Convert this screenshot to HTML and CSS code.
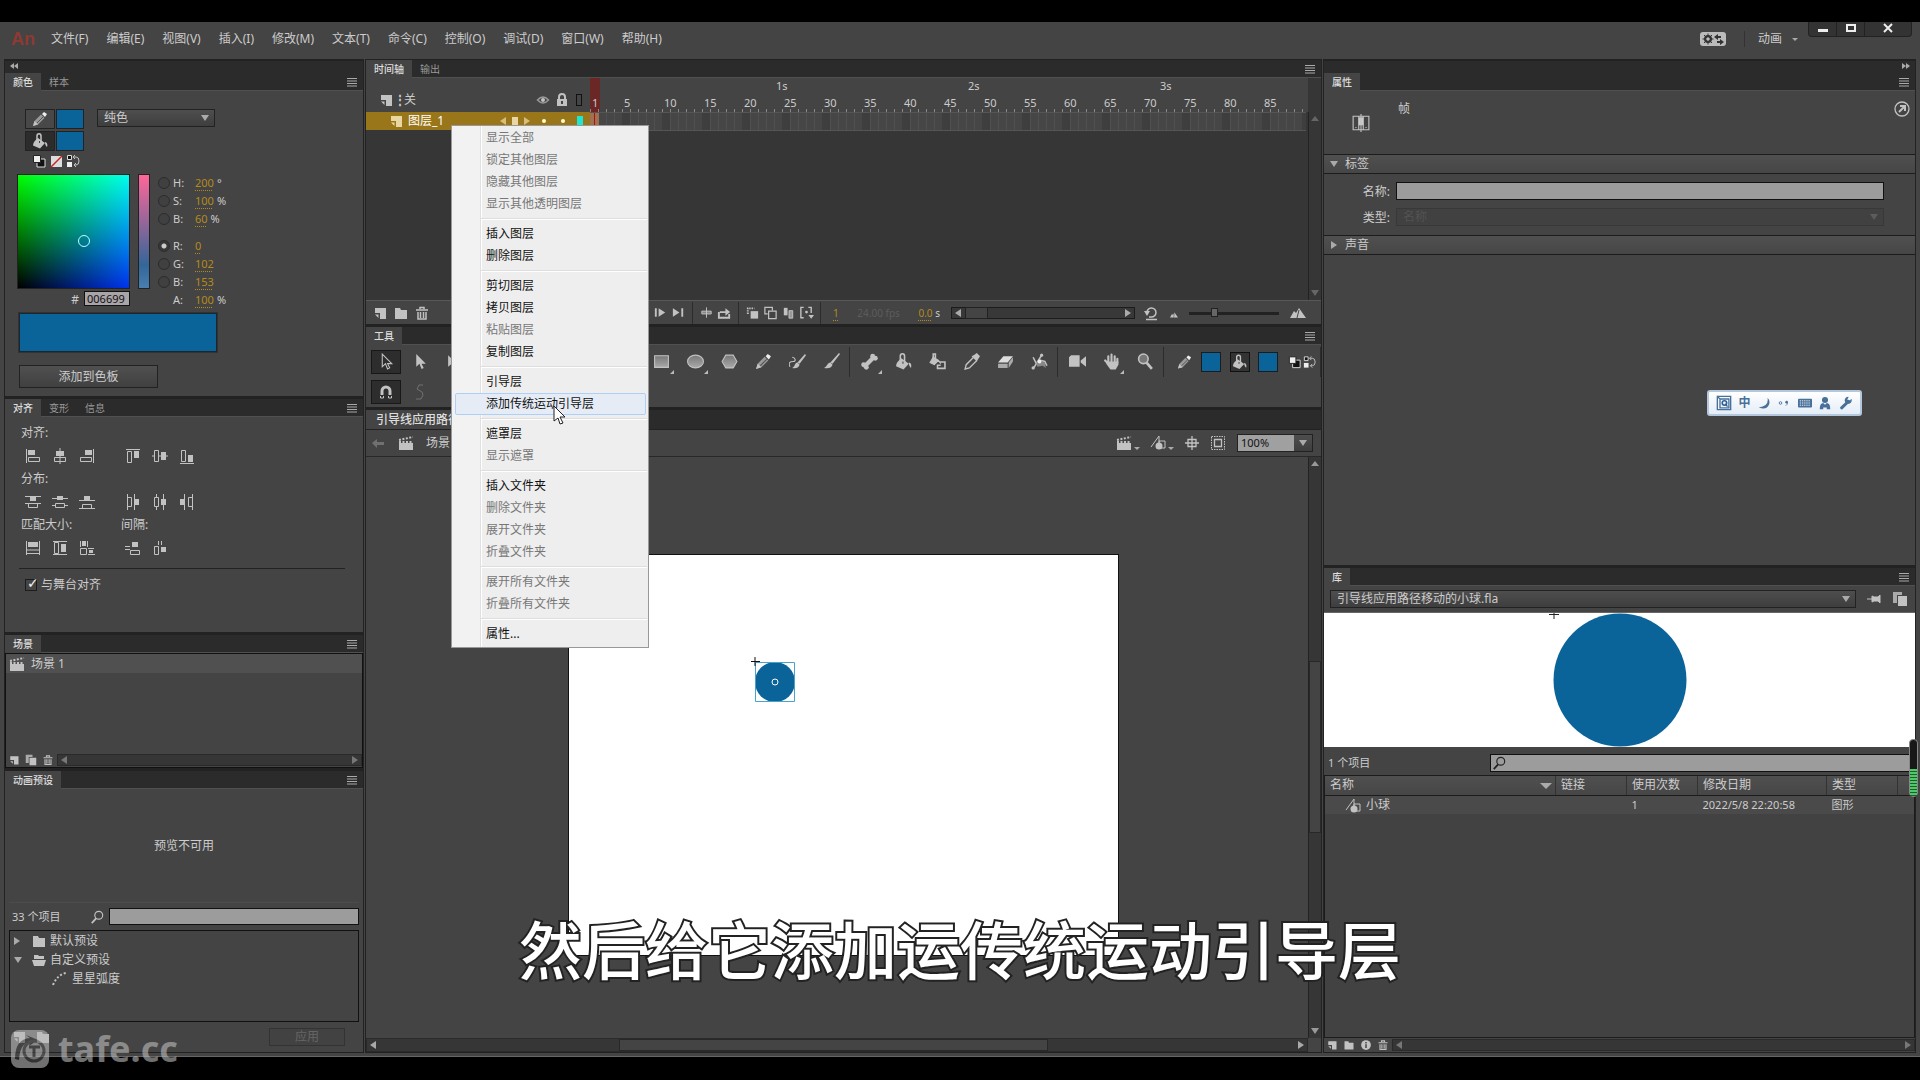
FILE: index.html
```html
<!DOCTYPE html>
<html lang="zh-CN">
<head>
<meta charset="utf-8">
<title>An</title>
<link rel="stylesheet" href="styles.css">
</head>
<body>
<svg class="sprite" aria-hidden="true">
  <defs>
    <linearGradient id="metal" x1="0" y1="0" x2="0" y2="1"><stop offset="0" stop-color="#777"/><stop offset="1" stop-color="#aaa"/></linearGradient>
  </defs>
  <symbol id="menu" viewBox="0 0 12 10"><path d="M1 1.500h10M1 4h10M1 6.500h10M1 9h10" stroke="currentColor"/></symbol>
  <symbol id="page" viewBox="0 0 16 16"><path d="M3 3h11v11H8V8H3z" fill="currentColor"/><path d="M3 9.500h3.500V13z" fill="currentColor"/></symbol>
  <symbol id="folder" viewBox="0 0 16 16"><path d="M2 3h5l1 2h6v9H2z" fill="currentColor"/></symbol>
  <symbol id="open" viewBox="0 0 16 16"><path d="M3 7V3h4l1 1h5v3zM1 8h14l-2 6H3z" fill="currentColor"/></symbol>
  <symbol id="trash" viewBox="0 0 16 16"><path d="M2 5h12M6 4V2.500h4V4M4 7v7h8V7M6.500 7v6M9.500 7v6" fill="none" stroke="currentColor" stroke-width="1.500"/></symbol>
  <symbol id="clap" viewBox="0 0 16 16"><path d="M1 8h14v7H1z" fill="currentColor"/><path d="M1 5l14-3M1 7h14" stroke="currentColor" stroke-width="2" stroke-dasharray="2 1.500"/></symbol>
  <symbol id="arrow" viewBox="0 0 16 16"><path d="M4 1v12l3-3 2 5 2-1-2-4h4z" fill="none" stroke="currentColor"/></symbol>
  <symbol id="arrowf" viewBox="0 0 16 16"><path d="M4 1v12l3-3 2 5 2-1-2-4h4z" fill="currentColor"/></symbol>
  <symbol id="transform" viewBox="0 0 16 16"><path d="M2 2l6 6-6 5z" fill="currentColor"/><path d="M10 3h4v11H6" fill="none" stroke="currentColor" stroke-dasharray="2 1"/></symbol>
  <symbol id="magnet" viewBox="0 0 16 16"><path d="M4 11V7a4 4 0 018 0v4" fill="none" stroke="currentColor" stroke-width="3"/><path d="M2.500 12v2h3v-2M10.500 12v2h3v-2" fill="none" stroke="currentColor"/></symbol>
  <symbol id="smooth" viewBox="0 0 16 16"><path d="M11 1H7L5 5l5 3 1 3-2 4H4" fill="none" stroke="currentColor"/></symbol>
  <symbol id="rect" viewBox="0 0 16 16"><path d="M1.500 2.500h13v11h-13z" fill="url(#metal)" stroke="currentColor"/></symbol>
  <symbol id="oval" viewBox="0 0 16 16"><ellipse cx="8" cy="8" rx="7.500" ry="6" fill="url(#metal)" stroke="currentColor"/></symbol>
  <symbol id="hex" viewBox="0 0 16 16"><path d="M4.500 2h7l3.500 6-3.500 6h-7L1 8z" fill="url(#metal)" stroke="currentColor"/></symbol>
  <symbol id="pencil" viewBox="0 0 16 16"><path d="M1 15l1.500-5L9 3.500l3.500 3.500L6 13.500z" fill="#999"/><path d="M1 15l1.500-5 3.500 3.500z" fill="currentColor"/><path d="M10 3l2-2 3 2-2 3z" fill="#eee"/><path d="M5 12l6-6" stroke="#555"/></symbol>
  <symbol id="brush" viewBox="0 0 16 16"><path d="M15 0l1 1-7 9-2-1zM7 9l2 2c-1 3-4 4-8 3 3-1 3-5 6-5z" fill="currentColor"/></symbol>
  <symbol id="paint" viewBox="0 0 16 16"><path d="M15 1l1 1-6 8-2-1zM8 9l2 2c-1 3-4 4-7 3 3-1 2-5 5-5z" fill="currentColor"/><path d="M1 13C-1 9 1 8 4 8s2-4-1-4" fill="none" stroke="currentColor"/></symbol>
  <symbol id="bone" viewBox="0 0 16 16"><path d="M4 12l8-8" stroke="currentColor" stroke-width="4"/><g fill="currentColor"><circle cx="2.500" cy="11" r="2.300"/><circle cx="5" cy="13.500" r="2.300"/><circle cx="11" cy="3" r="2.300"/><circle cx="13.500" cy="5" r="2.300"/></g></symbol>
  <symbol id="bucket" viewBox="0 0 16 16"><path d="M6 5l7 5-5 5.500-7-3c0-3 2-5 5-7.500zM13 9c2 0 3 3 2 5-1-1-2-2-2-5z" fill="currentColor"/><path d="M5 9V3c0-3 4-3 4 0v6" fill="none" stroke="currentColor" stroke-width="1.500"/><path d="M7.500 8v2" stroke="#444"/></symbol>
  <symbol id="ink" viewBox="0 0 16 16"><path d="M4 4l5 3-4 4-4-2zM9 7l2 3" fill="currentColor" stroke="currentColor"/><path d="M4 6V1h2v5M10 8.500h5v6H8v-3h3" fill="none" stroke="currentColor" stroke-width="1.500"/></symbol>
  <symbol id="dropper" viewBox="0 0 16 16"><path d="M10 4l-7 7-1 4 4-1 7-7" fill="none" stroke="currentColor" stroke-width="1.300"/><path d="M8 3l5 5 1-2 2-3-3-3-3 2z" fill="currentColor"/></symbol>
  <symbol id="eraser" viewBox="0 0 16 16"><path d="M6 3h9L10 9H1z" fill="#ddd"/><path d="M1 10h9v4H1zM11 9l4-5v4l-4 6z" fill="#aaa"/></symbol>
  <symbol id="width" viewBox="0 0 16 16"><path d="M2 15L10 2M2 4l3 6 4-3 4 1 2 4" fill="none" stroke="currentColor" stroke-width="1.500"/><path d="M5 9l4-2 4 2 1 5-3-2-5 1z" fill="#888"/><circle cx="2" cy="14" r="1.500" fill="currentColor"/><circle cx="8" cy="8" r="1.800" fill="#eee"/><circle cx="10" cy="2" r="1.500" fill="currentColor"/></symbol>
  <symbol id="camera" viewBox="0 0 16 16"><path d="M0 4l2-2h8v11H0zM11 7l5-4v10l-5-4z" fill="currentColor"/></symbol>
  <symbol id="hand" viewBox="0 0 16 16"><path d="M5 9V3M8 8V1.500M11 8V3M13.500 9V5.500M5 10L2 7" stroke="currentColor" stroke-width="2" stroke-linecap="round"/><path d="M4 8h10.500v3L12 15.500H7L3 10z" fill="currentColor"/></symbol>
  <symbol id="lens" viewBox="0 0 16 16"><circle cx="6" cy="5.500" r="4.500" fill="#777" stroke="currentColor" stroke-width="1.500"/><path d="M9 9l5 6" stroke="currentColor" stroke-width="2.500"/></symbol>
  <symbol id="find" viewBox="0 0 16 16"><circle cx="10" cy="6" r="4.500" fill="none" stroke="currentColor" stroke-width="1.300"/><path d="M7 9.500L2 15" stroke="currentColor" stroke-width="2"/></symbol>
  <symbol id="bw" viewBox="0 0 16 16"><path d="M6 6h8v8H6z" fill="#111" stroke="#ddd"/><path d="M2.500 2.500h7v7h-7z" fill="#eee" stroke="#222"/></symbol>
  <symbol id="none" viewBox="0 0 16 16"><path d="M3 3h11v11H3z" fill="#ddd"/><path d="M3 14L14 3" stroke="#c22" stroke-width="1.500"/></symbol>
  <symbol id="swap" viewBox="0 0 16 16"><path d="M2.500 2.500h4v4h-4z" fill="#111" stroke="#ddd"/><path d="M2 9h5v5H2z" fill="#eee"/><path d="M8 4h3q3 0 3 4t-3 4H9M10 2L8 4l2 2M11 10l-2 2 2 2" fill="none" stroke="currentColor"/></symbol>
  <symbol id="eye" viewBox="0 0 16 16"><path d="M2.500 8q5.500-6 11 0-5.500 6-11 0z" fill="none" stroke="#999" stroke-width="1.500"/><circle cx="8" cy="8" r="2" fill="currentColor"/></symbol>
  <symbol id="lock" viewBox="0 0 16 16"><path d="M3 7h10v7H3z" fill="currentColor"/><path d="M5 7V5a3 3 0 016 0v2" fill="none" stroke="currentColor" stroke-width="2"/><path d="M8 9v3" stroke="#444" stroke-width="2"/></symbol>
  <symbol id="step" viewBox="0 0 16 16"><path d="M2 3h2v9H2zM6 3l7 4.500L6 12z" fill="currentColor"/></symbol>
  <symbol id="last" viewBox="0 0 16 16"><path d="M2 3l7 4.500L2 12zM11 3h2v9h-2z" fill="currentColor"/></symbol>
  <symbol id="center" viewBox="0 0 16 16"><path d="M3 6h10v3H3z" fill="#888" stroke="currentColor"/><path d="M8 2v11" stroke="currentColor"/></symbol>
  <symbol id="loop" viewBox="0 0 16 16"><path d="M2 7v6h11V9" fill="none" stroke="currentColor" stroke-width="2"/><path d="M3 6h6V3l5 4-5 4V8H3z" fill="currentColor"/></symbol>
  <symbol id="onion" viewBox="0 0 16 16"><path d="M6 6h8v8H6z" fill="currentColor"/><path d="M3 9V3h7" fill="none" stroke="currentColor" stroke-width="2" stroke-dasharray="1.500 1"/></symbol>
  <symbol id="onion2" viewBox="0 0 16 16"><path d="M6 6h8v8H6zM10 5V2H2v7h3" fill="none" stroke="currentColor" stroke-width="1.300"/></symbol>
  <symbol id="multi" viewBox="0 0 16 16"><path d="M3 2.500h4v8H3z" fill="currentColor"/><path d="M8.500 5.500h4v8h-4z" fill="#999" stroke="currentColor"/></symbol>
  <symbol id="range" viewBox="0 0 16 16"><path d="M5 2H2v11h3M10 2h3v6" fill="none" stroke="currentColor" stroke-width="1.500"/><circle cx="8" cy="7" r="1.500" fill="currentColor"/><path d="M10 10h6l-3 4z" fill="currentColor"/></symbol>
  <symbol id="undo" viewBox="0 0 16 16"><path d="M4 8a4.500 4.500 0 114 4H6M3 14.500h11" fill="none" stroke="currentColor" stroke-width="1.500"/><path d="M1 6h6l-3 5z" fill="currentColor"/></symbol>
  <symbol id="hills" viewBox="0 0 16 16"><path d="M0 13l4-7 2 2 3-5 7 10z" fill="currentColor"/><path d="M7 13l2-8" stroke="#444"/></symbol>
  <symbol id="back" viewBox="0 0 16 16"><path d="M2 8l5-4v3h7v3H7v3z" fill="currentColor"/></symbol>
  <symbol id="shapes" viewBox="0 0 16 16"><path d="M1 12L9 1v11" fill="none" stroke="currentColor"/><path d="M9 6h6v7H9z" fill="none" stroke="currentColor"/><circle cx="9" cy="11" r="3.500" fill="currentColor"/></symbol>
  <symbol id="cross" viewBox="0 0 16 16"><path d="M8 1v14M1 8h14M4 4.500h8v7H4z" fill="none" stroke="currentColor" stroke-width="1.300"/></symbol>
  <symbol id="clip" viewBox="0 0 16 16"><path d="M1.500 1.500h13v13h-13z" fill="none" stroke="currentColor" stroke-dasharray="1.500 1"/><path d="M4.500 4.500h7v7h-7z" fill="none" stroke="currentColor" stroke-width="1.300"/></symbol>
  <symbol id="pin" viewBox="0 0 16 16"><path d="M1 8h5M6 5l2 1h4l2-2v8l-2-2H8l-2 1z" fill="currentColor" stroke="currentColor"/></symbol>
  <symbol id="copy" viewBox="0 0 16 16"><path d="M1 1h9v3H5v8H1z" fill="#aaa"/><path d="M6 5h9v10H6z" fill="currentColor"/></symbol>
  <symbol id="info" viewBox="0 0 16 16"><circle cx="8" cy="8" r="6.500" fill="currentColor"/><path d="M8 4v2M8 7v5" stroke="#444" stroke-width="2"/></symbol>
  <symbol id="frame" viewBox="0 0 16 16"><path d="M1 2h14v12H1zM6 2h4v12H6z" fill="none" stroke="currentColor"/><path d="M6 3h4v7H6z" fill="#ccc"/><path d="M8 0v16M3 12h1M12 12h1" stroke="currentColor"/></symbol>
  <symbol id="goto" viewBox="0 0 16 16"><circle cx="8" cy="8" r="7" fill="none" stroke="currentColor" stroke-width="1.300"/><path d="M5 11l5-5M6 5h5v5" fill="none" stroke="currentColor" stroke-width="2"/></symbol>
  <symbol id="motion" viewBox="0 0 16 16"><path d="M2 14Q6 4 15 2" fill="none" stroke="currentColor" stroke-width="2" stroke-dasharray="2 2"/></symbol>
  <symbol id="al" viewBox="0 0 16 16"><path d="M1.500 1v14" stroke="currentColor"/><path d="M3 2h7v5H3z" fill="currentColor"/><path d="M3.500 9.500h11v4h-11z" fill="none" stroke="currentColor"/></symbol>
  <symbol id="ac" viewBox="0 0 16 16"><path d="M8 0v16" stroke="currentColor"/><path d="M4 3h8v5H4z" fill="currentColor"/><path d="M2.500 9.500h11v4h-11z" fill="none" stroke="currentColor"/></symbol>
  <symbol id="ar" viewBox="0 0 16 16"><path d="M14.500 1v14" stroke="currentColor"/><path d="M6 2h7v5H6z" fill="currentColor"/><path d="M1.500 9.500h11v4h-11z" fill="none" stroke="currentColor"/></symbol>
  <symbol id="at" viewBox="0 0 16 16"><path d="M1 1.500h14" stroke="currentColor"/><path d="M9 3h5v7H9z" fill="currentColor"/><path d="M2.500 3.500h4v11h-4z" fill="none" stroke="currentColor"/></symbol>
  <symbol id="am" viewBox="0 0 16 16"><path d="M0 8h16" stroke="currentColor"/><path d="M9 4h5v8H9z" fill="currentColor"/><path d="M2.500 2.500h4v11h-4z" fill="#444" stroke="currentColor"/></symbol>
  <symbol id="ab" viewBox="0 0 16 16"><path d="M1 15.500h14" stroke="currentColor"/><path d="M9 7h5v7H9z" fill="currentColor"/><path d="M2.500 2.500h4v11h-4z" fill="none" stroke="currentColor"/></symbol>
  <symbol id="dt" viewBox="0 0 16 16"><path d="M0 2.500h16M0 9.500h16" stroke="currentColor"/><path d="M5 3h6v4H5z" fill="currentColor"/><path d="M3.500 9.500h9v4h-9z" fill="none" stroke="currentColor"/></symbol>
  <symbol id="dm" viewBox="0 0 16 16"><path d="M0 4.500h16M0 11.500h16" stroke="currentColor"/><path d="M5 2h6v4H5z" fill="currentColor"/><path d="M3.500 9.500h9v4h-9z" fill="#444" stroke="currentColor"/></symbol>
  <symbol id="db" viewBox="0 0 16 16"><path d="M0 6.500h16M0 14.500h16" stroke="currentColor"/><path d="M5 2h6v4H5z" fill="currentColor"/><path d="M3.500 10.500h9v4h-9z" fill="none" stroke="currentColor"/></symbol>
  <symbol id="dl" viewBox="0 0 16 16"><path d="M2.500 0v16M9.500 0v16" stroke="currentColor"/><path d="M10 5h4v6h-4z" fill="currentColor"/><path d="M2.500 3.500h4v9h-4z" fill="none" stroke="currentColor"/></symbol>
  <symbol id="dc" viewBox="0 0 16 16"><path d="M4.500 0v16M11.500 0v16" stroke="currentColor"/><path d="M9 5h5v6H9z" fill="currentColor"/><path d="M2.500 3.500h4v9h-4z" fill="#444" stroke="currentColor"/></symbol>
  <symbol id="dr" viewBox="0 0 16 16"><path d="M5.500 0v16M13.500 0v16" stroke="currentColor"/><path d="M1 5h4v6H1z" fill="currentColor"/><path d="M9.500 3.500h4v9h-4z" fill="none" stroke="currentColor"/></symbol>
  <symbol id="mw" viewBox="0 0 16 16"><path d="M1.500 1v14M14.500 1v14M2 10h12M2 13.500h12" stroke="currentColor"/><path d="M3 2h10v5H3z" fill="currentColor"/></symbol>
  <symbol id="mh" viewBox="0 0 16 16"><path d="M1 1.500h14M1 14.500h14" stroke="currentColor"/><path d="M9 4h5v8H9z" fill="currentColor"/><path d="M2.500 2.500h4v11h-4z" fill="none" stroke="currentColor"/></symbol>
  <symbol id="mb" viewBox="0 0 16 16"><path d="M1.500 1v6M8.500 1v6M9 8.500h6M9 14.500h7M1.500 8.500h6v6h-6z" stroke="currentColor" fill="none"/><path d="M3 1h4v5H3zM10 10h4v3h-4z" fill="currentColor"/></symbol>
  <symbol id="sv" viewBox="0 0 16 16"><path d="M0 6.500h5M0 9.500h5M5.500 10.500h9v4h-9z" stroke="currentColor" fill="none"/><path d="M7 2h6v5H7z" fill="currentColor"/></symbol>
  <symbol id="sh" viewBox="0 0 16 16"><path d="M6.500 1v4M9.500 1v4M2.500 6.500h4v8h-4z" stroke="currentColor" fill="none"/><path d="M9 7h5v5H9z" fill="currentColor"/></symbol>
</svg>

<main class="app">
  <header class="menubar">
    <b class="logo">An</b>
    <nav class="menus">
      <button>文件(F)</button><button>编辑(E)</button><button>视图(V)</button><button>插入(I)</button><button>修改(M)</button><button>文本(T)</button><button>命令(C)</button><button>控制(O)</button><button>调试(D)</button><button>窗口(W)</button><button>帮助(H)</button>
    </nav>
    <button class="sync" aria-label="同步"><svg viewBox="0 0 26 14"><circle cx="8" cy="7" r="3" fill="none" stroke="#333" stroke-width="2"/><path d="M8 1.500v11M2.500 7h11M4 3l8 8M12 3l-8 8" stroke="#333"/><circle cx="8" cy="7" r="1.500" fill="#bbb"/><path d="M14 5l4-3v2h3v2h-3v2zM24 10l-4-3v2h-3v2h3v2z" fill="#333"/></svg></button>
    <button class="workspace">动画<i class="tri down small"></i></button>
    <div class="winbtns">
      <button aria-label="最小化"><svg viewBox="0 0 12 12"><path d="M1 7h10v3H1z" fill="#eee"/></svg></button>
      <button aria-label="最大化"><svg viewBox="0 0 12 12"><path d="M2 3h8v6H2z" fill="none" stroke="#eee" stroke-width="2"/></svg></button>
      <button class="close" aria-label="关闭"><svg viewBox="0 0 12 12"><path d="M2 2l8 8M10 2l-8 8" stroke="#eee" stroke-width="2"/></svg></button>
    </div>
  </header>

  <div class="workspace-grid">
    <aside class="dock left">
      <div class="strip"><button aria-label="折叠"><i class="tri left"></i><i class="tri left"></i></button></div>
      <section class="panel color">
        <div class="tabs"><button class="on">颜色</button><button>样本</button><svg class="pm"><use href="#menu"/></svg></div>
        <div class="body">
          <div class="pickrow">
            <div class="chips">
              <button class="chipbtn" aria-label="笔触"><svg><use href="#pencil"/></svg></button><button class="chip" aria-label="笔触颜色"></button>
              <button class="chipbtn dark" aria-label="填充"><svg><use href="#bucket"/></svg></button><button class="chip" aria-label="填充颜色"></button>
            </div>
            <div class="drop"><select aria-label="类型"><option>纯色</option></select><i class="tri down"></i></div>
          </div>
          <div class="minis"><svg><use href="#bw"/></svg><svg><use href="#none"/></svg><svg><use href="#swap"/></svg></div>
          <div class="mixer">
            <div class="field"><i class="ring"></i></div>
            <div class="bar"></div>
            <div class="chans">
              <label><input type="radio" name="c"><span>H:</span><a href="#h">200</a>°</label>
              <label><input type="radio" name="c"><span>S:</span><a href="#s">100</a>%</label>
              <label><input type="radio" name="c"><span>B:</span><a href="#b">60</a>%</label>
              <label class="gap"><input type="radio" name="c" checked><span>R:</span><a href="#r">0</a></label>
              <label><input type="radio" name="c"><span>G:</span><a href="#g">102</a></label>
              <label><input type="radio" name="c"><span>B:</span><a href="#bl">153</a></label>
              <label><i class="noradio"></i><span>A:</span><a href="#a">100</a>%</label>
            </div>
            <label class="hex">#<input type="text" value="006699"></label>
          </div>
          <div class="bigchip"></div>
          <button class="btn addsw">添加到色板</button>
        </div>
      </section>
      <section class="panel align">
        <div class="tabs"><button class="on">对齐</button><button>变形</button><button>信息</button><svg class="pm"><use href="#menu"/></svg></div>
        <div class="body">
          <div class="aligngrid">
            <span class="cap">对齐:</span>
            <svg><use href="#al"/></svg><svg><use href="#ac"/></svg><svg><use href="#ar"/></svg><i></i><svg><use href="#at"/></svg><svg><use href="#am"/></svg><svg><use href="#ab"/></svg>
            <span class="cap">分布:</span>
            <svg><use href="#dt"/></svg><svg><use href="#dm"/></svg><svg><use href="#db"/></svg><i></i><svg><use href="#dl"/></svg><svg><use href="#dc"/></svg><svg><use href="#dr"/></svg>
            <span class="cap half">匹配大小:</span><span class="cap rest">间隔:</span>
            <svg><use href="#mw"/></svg><svg><use href="#mh"/></svg><svg><use href="#mb"/></svg><i></i><svg><use href="#sv"/></svg><svg><use href="#sh"/></svg>
          </div>
          <hr>
          <label class="check"><input type="checkbox" checked>与舞台对齐</label>
        </div>
      </section>
      <section class="panel scene">
        <div class="tabs"><button class="on">场景</button><svg class="pm"><use href="#menu"/></svg></div>
        <div class="body">
          <div class="scenerow"><svg><use href="#clap"/></svg>场景 1</div>
          <footer class="foot"><svg><use href="#page"/></svg><svg><use href="#copy"/></svg><svg><use href="#trash"/></svg><div class="hscroll"><i class="tri left"></i><i class="tri right"></i></div></footer>
        </div>
      </section>
      <section class="panel presets">
        <div class="tabs"><button class="on">动画预设</button><svg class="pm"><use href="#menu"/></svg></div>
        <div class="body">
          <div class="preview">预览不可用</div>
          <div class="searchrow"><label for="ps">33 个项目</label><svg><use href="#find"/></svg><input id="ps" type="text"></div>
          <ul class="tree">
            <li><i class="tri right"></i><svg><use href="#folder"/></svg>默认预设</li>
            <li><i class="tri down"></i><svg><use href="#open"/></svg>自定义预设</li>
            <li class="leaf"><svg><use href="#motion"/></svg>星星弧度</li>
          </ul>
          <footer class="presetfoot"><svg><use href="#page"/></svg><svg><use href="#folder"/></svg><button class="btn" disabled>应用</button></footer>
        </div>
      </section>
    </aside>

    <div class="dock center">
      <section class="panel timeline">
        <div class="tabs"><button class="on">时间轴</button><button>输出</button><svg class="pm"><use href="#menu"/></svg></div>
        <div class="tl">
          <div class="layers">
            <div class="lhead"><svg><use href="#page"/></svg><b>⋮</b><span>关</span><i class="grow"></i><svg><use href="#eye"/></svg><svg><use href="#lock"/></svg><i class="outline"></i></div>
            <div class="layer"><svg><use href="#page"/></svg><span>图层_1</span><i class="grow"></i><i class="tri left"></i><i class="key"></i><i class="tri right"></i><i class="dot"></i><i class="dot"></i><i class="tealbox"></i></div>
          </div>
          <div class="frames">
            <div class="ruler">
              <div class="secs"><span></span><span>1s</span><span>2s</span><span>3s</span></div>
              <div class="nums"><span>1</span><span>5</span><span>10</span><span>15</span><span>20</span><span>25</span><span>30</span><span>35</span><span>40</span><span>45</span><span>50</span><span>55</span><span>60</span><span>65</span><span>70</span><span>75</span><span>80</span><span>85</span></div>
            </div>
            <div class="track"><i class="kf"></i></div>
          </div>
          <div class="vscroll"><i class="tri up"></i><i class="tri down"></i></div>
        </div>
        <footer class="tlfoot">
          <div class="lf"><svg><use href="#page"/></svg><svg><use href="#folder"/></svg><svg><use href="#trash"/></svg></div>
          <div class="grp"><svg><use href="#step"/></svg><svg><use href="#last"/></svg></div>
          <div class="grp"><svg><use href="#center"/></svg><svg><use href="#loop"/></svg></div>
          <div class="grp"><svg><use href="#onion"/></svg><svg><use href="#onion2"/></svg><svg><use href="#multi"/></svg><svg><use href="#range"/></svg></div>
          <div class="stats"><a href="#f">1</a><span class="fps">24.00 fps</span><span><a href="#t">0.0</a> s</span></div>
          <div class="hscroll framed"><i class="tri left"></i><i class="thumb"></i><i class="tri right"></i></div>
          <svg><use href="#undo"/></svg><svg class="mini"><use href="#hills"/></svg>
          <input class="slide" type="range" value="27" aria-label="缩放"><svg class="wide"><use href="#hills"/></svg>
        </footer>
      </section>
      <section class="panel tools">
        <div class="tabs"><button class="on">工具</button><svg class="pm"><use href="#menu"/></svg></div>
        <div class="toolbody">
          <div class="toolset">
            <button class="on" aria-label="选择"><svg><use href="#arrow"/></svg></button><button aria-label="部分选取"><svg><use href="#arrowf"/></svg></button><button aria-label="任意变形"><svg><use href="#transform"/></svg></button><button aria-label="旋转"></button>
            <i class="gap4"></i>
            <button aria-label="套索"></button><button aria-label="钢笔"></button><button aria-label="文本"></button><button aria-label="线条"></button><button class="more" aria-label="矩形"><svg><use href="#rect"/></svg></button><button class="more" aria-label="椭圆"><svg><use href="#oval"/></svg></button><button aria-label="多角星形"><svg><use href="#hex"/></svg></button><button aria-label="铅笔"><svg><use href="#pencil"/></svg></button><button aria-label="画笔"><svg><use href="#paint"/></svg></button><button aria-label="刷子"><svg><use href="#brush"/></svg></button>
            <i class="sep"></i>
            <button class="more" aria-label="骨骼"><svg><use href="#bone"/></svg></button><button aria-label="颜料桶"><svg><use href="#bucket"/></svg></button><button aria-label="墨水瓶"><svg><use href="#ink"/></svg></button><button aria-label="滴管"><svg><use href="#dropper"/></svg></button><button aria-label="橡皮擦"><svg><use href="#eraser"/></svg></button><button aria-label="宽度"><svg><use href="#width"/></svg></button>
            <i class="sep"></i>
            <button aria-label="摄像头"><svg><use href="#camera"/></svg></button><button class="more" aria-label="手形"><svg><use href="#hand"/></svg></button><button aria-label="放大镜"><svg><use href="#lens"/></svg></button>
            <i class="sep"></i>
            <div class="fillset"><svg><use href="#pencil"/></svg><i class="sw"></i><span class="fillbtn"><svg><use href="#bucket"/></svg></span><i class="sw"></i><span class="pair"><svg><use href="#bw"/></svg><svg><use href="#swap"/></svg></span></div>
          </div>
          <div class="toolopts"><button class="on" aria-label="贴紧"><svg><use href="#magnet"/></svg></button><button class="dim" aria-label="平滑"><svg><use href="#smooth"/></svg></button></div>
        </div>
      </section>
      <section class="panel doc">
        <div class="tabs doctabs"><button class="on">引导线应用路径移动的小球.fla</button></div>
        <div class="editbar">
          <svg class="dim"><use href="#back"/></svg><svg><use href="#clap"/></svg><span>场景 1</span><i class="grow"></i>
          <div class="edittools"><svg><use href="#clap"/></svg><i class="tri down small"></i><svg><use href="#shapes"/></svg><i class="tri down small"></i><svg><use href="#cross"/></svg><svg><use href="#clip"/></svg></div>
          <div class="drop zoomsel"><select aria-label="缩放比例"><option>100%</option></select><i class="tri down"></i></div>
        </div>
        <div class="stagewrap">
          <div class="pasteboard">
            <div class="stage"><svg class="ball" viewBox="0 0 48 48"><circle cx="27" cy="27" r="20" fill="#0a6399"/><path d="M7.500 7.500h39v39h-39z" fill="none" stroke="#4aa3c8"/><circle cx="27" cy="27" r="3" fill="none" stroke="#fff"/><path d="M7 2v9M3 6.500h9" stroke="#111"/></svg></div>
          </div>
          <div class="vscroll"><i class="tri up"></i><i class="thumb"></i><i class="tri down"></i></div>
          <div class="hscroll"><i class="tri left"></i><i class="thumb"></i><i class="tri right"></i></div>
          <div></div>
        </div>
      </section>
    </div>

    <aside class="dock right">
      <div class="strip end"><button aria-label="折叠"><i class="tri right"></i><i class="tri right"></i></button></div>
      <section class="panel props">
        <div class="tabs"><button class="on">属性</button><svg class="pm"><use href="#menu"/></svg></div>
        <div class="body">
          <div class="phead"><svg class="fr"><use href="#frame"/></svg><span>帧</span><i class="grow"></i><svg class="go"><use href="#goto"/></svg></div>
          <h2><i class="tri down"></i>标签</h2>
          <div class="form">
            <label for="nm">名称:</label><input id="nm" type="text">
            <label for="ty">类型:</label><div class="drop off"><select id="ty" disabled><option>名称</option></select><i class="tri down"></i></div>
          </div>
          <h2><i class="tri right"></i>声音</h2>
        </div>
      </section>
      <section class="panel library">
        <div class="tabs"><button class="on">库</button><svg class="pm"><use href="#menu"/></svg></div>
        <div class="libsel"><div class="drop"><select aria-label="文档"><option>引导线应用路径移动的小球.fla</option></select><i class="tri down"></i></div><svg><use href="#pin"/></svg><svg><use href="#copy"/></svg></div>
        <div class="libprev"><svg viewBox="0 0 150 134"><circle cx="75" cy="67" r="66.500" fill="#0a6399"/><path d="M9 0v6M4 1.500h10" stroke="#222"/></svg></div>
        <div class="libcount"><label for="ls">1 个项目</label><div class="searchbox"><svg><use href="#find"/></svg><input id="ls" type="text"></div></div>
        <div class="listwrap">
          <table>
            <colgroup><col><col class="c2"><col class="c3"><col class="c4"><col class="c5"><col class="c6"></colgroup>
            <thead><tr><th>名称<i class="tri down sort"></i></th><th>链接</th><th>使用次数</th><th>修改日期</th><th>类型</th><th></th></tr></thead>
            <tbody><tr><td><svg><use href="#shapes"/></svg>小球</td><td></td><td>1</td><td>2022/5/8 22:20:58</td><td>图形</td><td></td></tr></tbody>
          </table>
        </div>
        <footer class="foot"><svg><use href="#page"/></svg><svg><use href="#folder"/></svg><svg><use href="#info"/></svg><svg><use href="#trash"/></svg><div class="hscroll"><i class="tri left"></i><i class="tri right"></i></div></footer>
      </section>
    </aside>
  </div>
</main>

<menu class="context">
  <li><button disabled>显示全部</button></li><li><button disabled>锁定其他图层</button></li><li><button disabled>隐藏其他图层</button></li><li><button disabled>显示其他透明图层</button></li>
  <li class="line"></li>
  <li><button>插入图层</button></li><li><button>删除图层</button></li>
  <li class="line"></li>
  <li><button>剪切图层</button></li><li><button>拷贝图层</button></li><li><button disabled>粘贴图层</button></li><li><button>复制图层</button></li>
  <li class="line"></li>
  <li><button>引导层</button></li><li><button class="hot">添加传统运动引导层</button></li>
  <li class="line"></li>
  <li><button>遮罩层</button></li><li><button disabled>显示遮罩</button></li>
  <li class="line"></li>
  <li><button>插入文件夹</button></li><li><button disabled>删除文件夹</button></li><li><button disabled>展开文件夹</button></li><li><button disabled>折叠文件夹</button></li>
  <li class="line"></li>
  <li><button disabled>展开所有文件夹</button></li><li><button disabled>折叠所有文件夹</button></li>
  <li class="line"></li>
  <li><button>属性...</button></li>
</menu>
<svg class="cursor" viewBox="0 0 14 20"><path d="M1 1v15l4-3 2 6 3-1-3-6h5z" fill="#fff" stroke="#222"/></svg>

<div class="ime">
  <svg viewBox="0 0 18 18"><path d="M1.500 1.500h15v15h-15zM4.500 4.500h10v10h-10zM1 1l4 4" fill="none" stroke="#48719a" stroke-width="1.500"/><circle cx="9.500" cy="9" r="2.500" fill="none" stroke="#2f5f99" stroke-width="1.800"/><path d="M10 10l3 3" stroke="#2f5f99" stroke-width="1.500"/></svg>
  <b>中</b>
  <svg viewBox="0 0 16 16"><path d="M12 2q2 10-10 11 9 4 12-4 1-4-2-7z" fill="#48719a"/></svg>
  <svg viewBox="0 0 16 16"><circle cx="4" cy="8" r="1.500" fill="none" stroke="#48719a"/><circle cx="11" cy="7" r="1.500" fill="#48719a"/><path d="M12 7q0 3-2 4" stroke="#48719a" fill="none"/></svg>
  <svg viewBox="0 0 16 16"><rect x="0" y="3" width="16" height="10" rx="1" fill="#48719a"/><path d="M2 5.500h12M2 8h12M2 10.500h12" stroke="#fff" stroke-dasharray="1.500 1"/></svg>
  <svg viewBox="0 0 16 16"><circle cx="8" cy="4.500" r="3.500" fill="#48719a"/><path d="M2 15q0-7 4-7l2 2 2-2q4 0 4 7h-4v-2H6v2z" fill="#48719a"/></svg>
  <svg viewBox="0 0 16 16"><path d="M3 13.500L11 6" stroke="#48719a" stroke-width="3.500" stroke-linecap="round"/><path d="M14 3a4 4 0 11-3-2L9.500 4 12 6z" fill="#48719a"/></svg>
</div>
<div class="meter"><i></i></div>
<div class="subtitle">然后给它添加运传统运动引导层</div>
<div class="mark"><svg viewBox="0 0 40 40"><rect x="1" y="1" width="38" height="38" rx="8" fill="#bbb"/><path d="M5 30Q5 10 20 9l-4-3 12 5-9 6 1-4Q10 14 9 31z" fill="#444"/><circle cx="24" cy="22" r="10" fill="none" stroke="#555" stroke-width="3"/><path d="M19 18h11M24 18v10" stroke="#444" stroke-width="3"/></svg>tafe.cc</div>
</body>
</html>
```
FILE: styles.css
```css
* { box-sizing: border-box; }
html, body { height: 100%; }
body {
  margin: 0; background: #000; color: #ccc; overflow: hidden;
  font: 12px/16px "Noto Sans", "Noto Sans CJK SC", sans-serif;
  display: flex; flex-direction: column; padding: 22px 0 23px; position: relative;
}
button, input, select { font: inherit; color: inherit; border: 0; padding: 0; margin: 0; background: none; border-radius: 0; }
input[type=text] { background: #9c9c9c; border: 1px solid #111; min-width: 0; }
svg { width: 16px; height: 16px; flex: none; color: #c2c2c2; display: block; }
.sprite { position: absolute; width: 0; height: 0; }
i { display: block; flex: none; }
.grow { flex: 1; }
.tri { width: 0; height: 0; border: 4px solid transparent; color: #aaa; }
.tri.left { border-left: 0; border-right: 6px solid; }
.tri.right { border-right: 0; border-left: 6px solid; }
.tri.down { border-bottom: 0; border-top: 6px solid; }
.tri.up { border-top: 0; border-bottom: 5px solid; }
.tri.small { border-width: 3px 3px 0; }

.app { flex: 1; min-height: 0; display: flex; flex-direction: column; background: #444; border-bottom: 1px solid #666; }
.menubar { height: 38px; display: flex; align-items: center; flex: none; padding: 0 8px 4px 11px; }
.logo { color: #8c3a32; font: bold 18px/24px "Liberation Sans", sans-serif; width: 32px; }
.menus { display: flex; flex: 1; gap: 2px; }
.menus button { padding: 0 8px; }
.sync { width: 26px; height: 14px; background: #bbb; border-radius: 3px; margin-right: 18px; }
.sync svg { width: 26px; height: 14px; }
.workspace { display: flex; align-items: center; gap: 10px; border-left: 1px solid #333; padding-left: 13px; margin-right: 10px; }
.winbtns { display: flex; align-self: flex-start; background: #333; border: 1px solid #222; border-top: 0; border-radius: 0 0 4px 4px; height: 15px; }
.winbtns button { width: 28px; border-right: 1px solid #222; display: flex; justify-content: center; }
.winbtns .close { width: 46px; border: 0; }
.winbtns svg { width: 12px; height: 12px; }

.workspace-grid { flex: 1; min-height: 0; display: grid; grid-template-columns: 358px minmax(0, 1fr) 591px; gap: 3px; padding: 0 5px 4px; }
.workspace-grid > .dock { background: #222; display: flex; flex-direction: column; gap: 3px; min-height: 0; outline: 1px solid #222; }
.strip { height: 13px; margin-bottom: -3px; background: #2b2b2b; border-top: 1px solid #222; padding: 2px 5px; }
.strip button { display: flex; }
.strip .tri { border-top-width: 3px; border-bottom-width: 3px; border-left-width: 4px; border-right-width: 0; }
.strip .tri.left { border-left-width: 0; border-right-width: 4px; }
.strip.end { display: flex; justify-content: flex-end; }
.panel { background: #444; display: flex; flex-direction: column; min-height: 0; min-width: 0; }
.tabs { height: 18px; flex: none; background: #2b2b2b; display: flex; border-bottom: 1px solid #505050; font-size: 10px; }
.tabs button { padding: 0 8px; height: 18px; color: #999; line-height: 16px; }
.tabs button.on { background: #444; color: #ddd; font-weight: 500; }
.tabs .pm { width: 12px; height: 10px; margin: 4px 5px 0 auto; color: #aaa; }

.color { height: 323px; flex: none; }
.color .body { padding: 18px 14px 0 12px; }
.pickrow { display: flex; gap: 13px; padding-left: 8px; }
.chips { display: grid; grid-template-columns: 30px 28px; gap: 2px 1px; }
.chipbtn, .chip { height: 20px; border: 1px solid #222; }
.chipbtn { display: flex; justify-content: center; align-items: center; background: #484848; }
.dark { background: #2c2c2c; }
.chip { background: #0a6399; }
.drop { display: flex; position: relative; align-items: center; height: 18px; border: 1px solid #222; background: linear-gradient(#4e4e4e, #3e3e3e); padding-right: 5px; }
.drop select { appearance: none; flex: 1; padding-left: 6px; min-width: 0; outline: 0; height: 16px; line-height: 16px; }
.pickrow .drop { width: 118px; }
.minis { display: flex; gap: 1px; padding: 2px 0 0 14px; }
.minis svg { width: 16px; }
.mixer { display: grid; grid-template-columns: 113px 12px 1fr; column-gap: 8px; grid-template-rows: 115px 17px; margin-top: 5px; }
.field { position: relative; border: 1px solid #222; background: linear-gradient(to top, #000, #0f0), linear-gradient(to right, #000, #03e); background-blend-mode: screen; }
.ring { position: absolute; left: 60px; top: 60px; width: 12px; height: 12px; border: 1px solid #bff; border-radius: 50%; }
.bar { border: 1px solid #222; background: linear-gradient(#ff6699, #336699 80%, #4a7db0); }
.chans { grid-row: span 2; }
.chans label { display: flex; height: 18px; align-items: center; line-height: 18px; font-size: 11px; }
.chans .gap { margin-top: 9px; }
.chans span { width: 22px; }
.chans a, .stats a { color: #b58a1b; text-decoration: underline dotted; text-underline-offset: 3px; margin-right: 3px; }
.chans input, .noradio { appearance: none; width: 12px; height: 12px; border-radius: 50%; border: 1px solid #2c2c2c; margin-right: 3px; background: #404040; }
.chans input:checked { background: radial-gradient(#ccc 2px, #383838 3px); }
.noradio { visibility: hidden; }
.hex { display: flex; justify-content: flex-end; gap: 5px; line-height: 17px; grid-column: 1; grid-row: 2; padding-top: 2px; }
.hex input { width: 46px; height: 15px; padding: 0 2px; color: #111; background: #a8a4a8; font-size: 11px; line-height: 13px; }
.bigchip { width: 198px; height: 39px; margin: 7px 0 13px 2px; background: #0a6399; border: 1px solid #1a2630; outline: 1px solid #333; }
.btn { border: 1px solid #222; background: linear-gradient(#505050, #404040); }
.addsw { width: 139px; height: 23px; margin-left: 2px; display: block; }

.align { height: 233px; flex: none; }
.align .body { padding: 8px 18px 0 14px; }
.aligngrid { display: grid; grid-template-columns: repeat(3, 27px) 19px repeat(3, 27px); row-gap: 7px; justify-items: center; }
.cap { grid-column: 1 / -1; justify-self: start; padding-left: 2px; }
.cap.half { grid-column: 1 / 5; }
.cap.rest { grid-column: 5 / -1; }
hr { border: 0; border-top: 1px solid #222; margin: 12px 0 8px; }
.check { display: flex; align-items: center; gap: 4px; padding-left: 6px; }
.check input { appearance: none; width: 12px; height: 12px; border: 1px solid #1c1c1c; position: relative; }
.check input::before { content: "✓"; color: #eee; font: 14px/12px "DejaVu Sans", sans-serif; position: absolute; left: 1px; top: -3px; }

.scene { height: 133px; flex: none; }
.scene .body { flex: 1; border: 1px solid #111; display: flex; flex-direction: column; justify-content: space-between; }
.scenerow { height: 19px; background: #505050; display: flex; align-items: center; gap: 6px; padding-left: 3px; }
.foot { display: flex; align-items: center; height: 14px; flex: none; gap: 1px; }
.foot svg { width: 16px; height: 12px; }
.hscroll { flex: 1; height: 12px; display: flex; align-items: center; justify-content: space-between; background: #363636; border: 1px solid #2a2a2a; padding: 0 3px; }
.foot .tri { color: #777; }

.presets { flex: 1; }
.presets .body { flex: 1; display: flex; flex-direction: column; padding: 0 4px; }
.preview { flex: 1; border-bottom: 1px solid #4c4c4c; display: flex; align-items: center; justify-content: center; }
.searchrow { display: flex; align-items: center; height: 27px; font-size: 11px; padding-left: 3px; }
.searchrow label { width: 77px; }
.searchrow svg { margin-right: 4px; height: 14px; }
.searchrow input { flex: 1; height: 17px; }
.tree { list-style: none; margin: 0; padding: 0 4px; height: 92px; border: 1px solid #111; }
.tree li { display: flex; align-items: center; height: 19px; gap: 3px; }
.tree .tri { margin: 0 8px 0 0; width: 6px; }
.tree .tri.down { margin-right: 6px; }
.tree .leaf { padding-left: 37px; gap: 5px; }
.presetfoot { display: flex; align-items: center; height: 30px; gap: 8px; padding: 0 14px 0 2px; }
.presetfoot .btn { width: 76px; height: 18px; margin-left: auto; color: #666; background: #424242; border-color: #333; line-height: 14px; }

.timeline { height: 264px; flex: none; }
.tl { flex: 1; display: grid; grid-template-columns: 224px minmax(0, 1fr) 13px; background: #363636; min-height: 0; }
.lhead { height: 34px; background: #444; display: flex; align-items: center; padding: 10px 8px 0 12px; gap: 3px; }
.lhead b { width: 4px; line-height: 14px; margin-left: -3px; }
.lhead span { padding-left: 3px; }
.outline { width: 6px; height: 12px; border: 1px solid #111; margin-left: 3px; }
.layer { height: 18px; background: #99761a; display: flex; align-items: center; color: #fff; padding: 0 7px 0 22px; }
.layer span { padding-left: 4px; }
.layer svg { color: #e8d7a2; }
.layer .tri { color: #d9bd7a; margin: 0 2px; }
.key { width: 6px; height: 8px; background: #e8d7a2; margin: 0 4px; }
.dot { width: 4px; height: 4px; border-radius: 50%; background: #ffc; margin: 0 5px 0 10px; }
.tealbox { width: 6px; height: 11px; background: #1fe6d2; margin-left: 7px; }
.ruler { height: 34px; background: #444; background-image: linear-gradient(to right, #6b2626 10px, transparent 0); overflow: hidden; font-size: 11px; }
.secs, .nums { display: flex; }
.secs { height: 15px; }
.secs span, .nums span { width: 192px; flex: none; padding-left: 2px; }
.secs span:first-child { width: 184px; }
.nums { height: 19px; background: repeating-linear-gradient(to right, #888 0 1px, transparent 1px 8px) 0 16px / 100% 3px no-repeat; line-height: 20px; }
.nums span { width: 40px; }
.nums span:first-child { width: 32px; }
.track { height: 19px; display: flex; margin-right: 2px; border-top: 1px solid #555; border-bottom: 1px solid #555; background: repeating-linear-gradient(to right, transparent 0 32px, #3e3e3e 32px 40px), repeating-linear-gradient(to right, #505050 0 1px, #464646 1px 8px); }
.kf { width: 9px; background: linear-gradient(to right, #a07050 4px, #a11 4px 5px, #a07050 5px); }
.vscroll { background: #363636; border-left: 1px solid #222; display: flex; flex-direction: column; justify-content: space-between; align-items: center; padding: 4px 0; }
.tl .vscroll { margin-top: 34px; }
.vscroll .tri.up, .vscroll .tri.down { color: #999; }
.tl .vscroll .tri { color: #666; }
.tlfoot { height: 24px; display: flex; align-items: center; border-top: 1px solid #585858; flex: none; padding: 0 13px 0 6px; }
.lf { display: flex; gap: 5px; width: 275px; }
.grp { display: flex; gap: 3px; padding: 0 6px; height: 22px; align-items: center; border-right: 1px solid #2c2c2c; }
.grp svg { width: 15px; }
.stats { display: flex; width: 119px; padding-left: 12px; font-size: 10px; justify-content: space-between; margin-right: 11px; }
.stats a { margin: 0; }
.fps { color: #5c5c5c; }
.framed { border: 1px solid #1c1c1c; background: #383838; flex: 1; margin-right: 8px; }
.framed .thumb { width: 23px; height: 12px; border: 1px solid #222; background: #444; margin: 0 auto 0 4px; }
.mini { height: 8px; width: 12px; margin: 4px 9px 0; }
.wide { width: 20px; margin-left: 9px; }
.slide { appearance: none; width: 90px; height: 12px; background: linear-gradient(#222, #222) 0 5px / 100% 3px no-repeat; }
.slide::-webkit-slider-thumb { appearance: none; width: 7px; height: 9px; background: #666; border: 1px solid #222; }

.tools { height: 80px; flex: none; }
.toolbody { display: flex; flex-direction: column; padding-left: 3px; }
.toolset, .toolopts { display: flex; align-items: center; height: 33px; }
.toolopts { height: 28px; }
.toolset button, .toolopts button { width: 30px; height: 24px; margin: 0 2px; display: flex; align-items: center; justify-content: center; position: relative; flex: none; }
.toolset .on, .toolopts .on { background: #2d2d2d; border: 1px solid #181818; }
.toolset button svg { width: 17px; height: 17px; }
.more::after { content: ""; position: absolute; right: 2px; bottom: 0; border: 2px solid transparent; border-right-color: #bbb; border-bottom-color: #bbb; }
.gap4 { width: 3px; }
.sep { width: 1px; height: 30px; background: #2c2c2c; margin: 0 2px 0 1px; }
.fillset { display: flex; align-items: center; flex: 1; justify-content: space-between; padding: 0 3px 0 11px; border-right: 1px solid #2c2c2c; height: 30px; }
.fillset svg { width: 15px; }
.pair { display: flex; }
.sw { width: 20px; height: 20px; background: #0a6399; border: 1px solid #1c1c1c; }
.fillbtn { width: 20px; height: 20px; display: flex; align-items: center; justify-content: center; background: #333; border: 1px solid #111; }
.dim, .dim svg { color: #707070; }

.doc { flex: 1; }
.doctabs { height: 20px; font-size: 12px; border-bottom-color: #222; }
.doctabs button { width: 88px; height: 19px; line-height: 18px; padding: 0 0 0 10px; overflow: hidden; white-space: nowrap; text-align: left; }
.editbar { height: 27px; flex: none; display: flex; align-items: center; padding: 0 8px 0 4px; gap: 12px; border-bottom: 1px solid #282828; }
.edittools { display: flex; align-items: center; gap: 10px; }
.edittools .tri { margin: 10px 0 0 -8px; }
.zoomsel { width: 76px; height: 18px; margin-left: -1px; }
.zoomsel select { background: #a0a0a0; color: #111; margin-right: 5px; padding-left: 3px; font-size: 11px; }
.stagewrap { flex: 1; min-height: 0; display: grid; grid-template: minmax(0, 1fr) 14px / minmax(0, 1fr) 13px; }
.pasteboard { background: #444; position: relative; overflow: hidden; }
.stage { position: absolute; left: 203px; top: 98px; width: 549px; height: 400px; background: #fff; outline: 1px solid #111; }
.ball { position: absolute; left: 179px; top: 100px; width: 48px; height: 48px; }
.stagewrap .hscroll { height: 14px; }
.stagewrap .hscroll .thumb { width: 46%; height: 12px; background: #444; border: 1px solid #282828; margin: 0 auto 0 26%; }
.stagewrap .vscroll .thumb { width: 12px; height: 172px; background: #444; border: 1px solid #282828; }

.props { height: 492px; flex: none; }
.phead { display: flex; height: 63px; padding: 10px 5px 0 28px; }
.phead .fr { width: 18px; height: 18px; margin-top: 13px; }
.phead span { padding-left: 28px; }
h2 { margin: 0; height: 20px; font: inherit; line-height: 18px; display: flex; align-items: center; gap: 7px; padding-left: 6px; border: solid #1c1c1c; border-width: 1px 0; background: linear-gradient(#505050, #464646); }
h2 .tri.right { margin: 0 1px; }
.form { display: grid; grid-template-columns: 66px 1fr; grid-auto-rows: 18px; gap: 8px 6px; padding: 8px 31px 9px 0; line-height: 19px; }
.form label { text-align: right; }
.off { background: #414141; border-color: #383838; color: #5c5c5c; }
.off .tri { color: #5c5c5c; }

.library { flex: 1; }
.libsel { display: flex; align-items: center; gap: 10px; height: 27px; flex: none; padding: 0 7px 0 6px; border-bottom: 1px solid #666; }
.libsel .drop { flex: 1; }
.libprev { height: 134px; background: #fff; display: flex; justify-content: center; flex: none; }
.libprev svg { width: 150px; height: 134px; }
.libcount { display: flex; align-items: center; height: 28px; flex: none; font-size: 11px; padding: 4px 0 0 4px; }
.libcount label { width: 162px; }
.searchbox { flex: 1; display: flex; align-items: center; background: #9c9c9c; border: 1px solid #111; height: 18px; }
.searchbox svg { color: #222; height: 14px; }
.searchbox input { flex: 1; border: 0; height: 15px; }
.listwrap { flex: 1; border: 1px solid #1c1c1c; background: #424242; }
table { width: 100%; table-layout: fixed; border-collapse: collapse; }
th, td { text-align: left; font-weight: 400; padding: 0 0 0 5px; height: 19px; line-height: 18px; white-space: nowrap; }
th { border-right: 1px solid #333; border-bottom: 1px solid #1c1c1c; background: linear-gradient(#505050, #464646); }
td { background: #4a4a4a; font-size: 11px; }
td:first-child { padding-left: 20px; font-size: 12px; }
td svg { display: inline-block; vertical-align: middle; margin-right: 5px; }
.sort { float: right; border-width: 6px 6px 0; margin: 7px 3px 0 0; }
.c2, .c3 { width: 71px; } .c4 { width: 129px; } .c5 { width: 71px; } .c6 { width: 16px; }

.context { position: absolute; left: 451px; top: 125px; width: 198px; margin: 0; padding: 1px 1px 2px; list-style: none; border: 1px solid #989898; background: linear-gradient(to right, #f2f2f2 28px, #e0e0e0 28px 29px, #fff 29px 30px, #eee 30px); color: #111; }
.context button { display: block; width: 191px; height: 22px; line-height: 20px; text-align: left; padding-left: 30px; margin-left: 2px; border: 1px solid transparent; border-radius: 2px; }
.context button:disabled { color: #777; }
.context .hot { border-color: #aecff7; background: #e6ecf5; }
.context .line { height: 8px; margin-left: 28px; background: linear-gradient(#ddd, #ddd) 0 3px / 100% 1px no-repeat, linear-gradient(#fff, #fff) 0 4px / 100% 1px no-repeat; }
.cursor { position: absolute; left: 553px; top: 405px; width: 14px; height: 20px; }
.ime { position: absolute; left: 1707px; top: 390px; width: 155px; height: 26px; display: flex; align-items: center; justify-content: space-between; padding: 0 7px; border: 2px solid #b5c7dc; border-radius: 3px; background: linear-gradient(#fff, #e4edf7); color: #48719a; }
.ime svg { width: 14px; height: 14px; }
.ime svg:first-child { width: 16px; height: 16px; }
.meter { position: absolute; left: 1909px; top: 739px; width: 9px; height: 58px; border: 1px solid #888; border-radius: 4px; background: #181818; display: flex; align-items: flex-end; }
.meter i { width: 7px; height: 27px; background: repeating-linear-gradient(#4fc86a 0 2px, #205c2c 2px 3px); }
.subtitle { position: absolute; left: 0; right: 0; top: 909px; text-align: center; font: 500 63px/76px "Noto Sans CJK SC", sans-serif; color: #fff; -webkit-text-stroke: 4px #222; paint-order: stroke fill; }
.mark { position: absolute; left: 10px; top: 1029px; display: flex; align-items: center; gap: 8px; font: bold 36px/40px "Noto Sans", sans-serif; color: #bbb; opacity: .6; }
.mark svg { width: 40px; height: 40px; }
```
